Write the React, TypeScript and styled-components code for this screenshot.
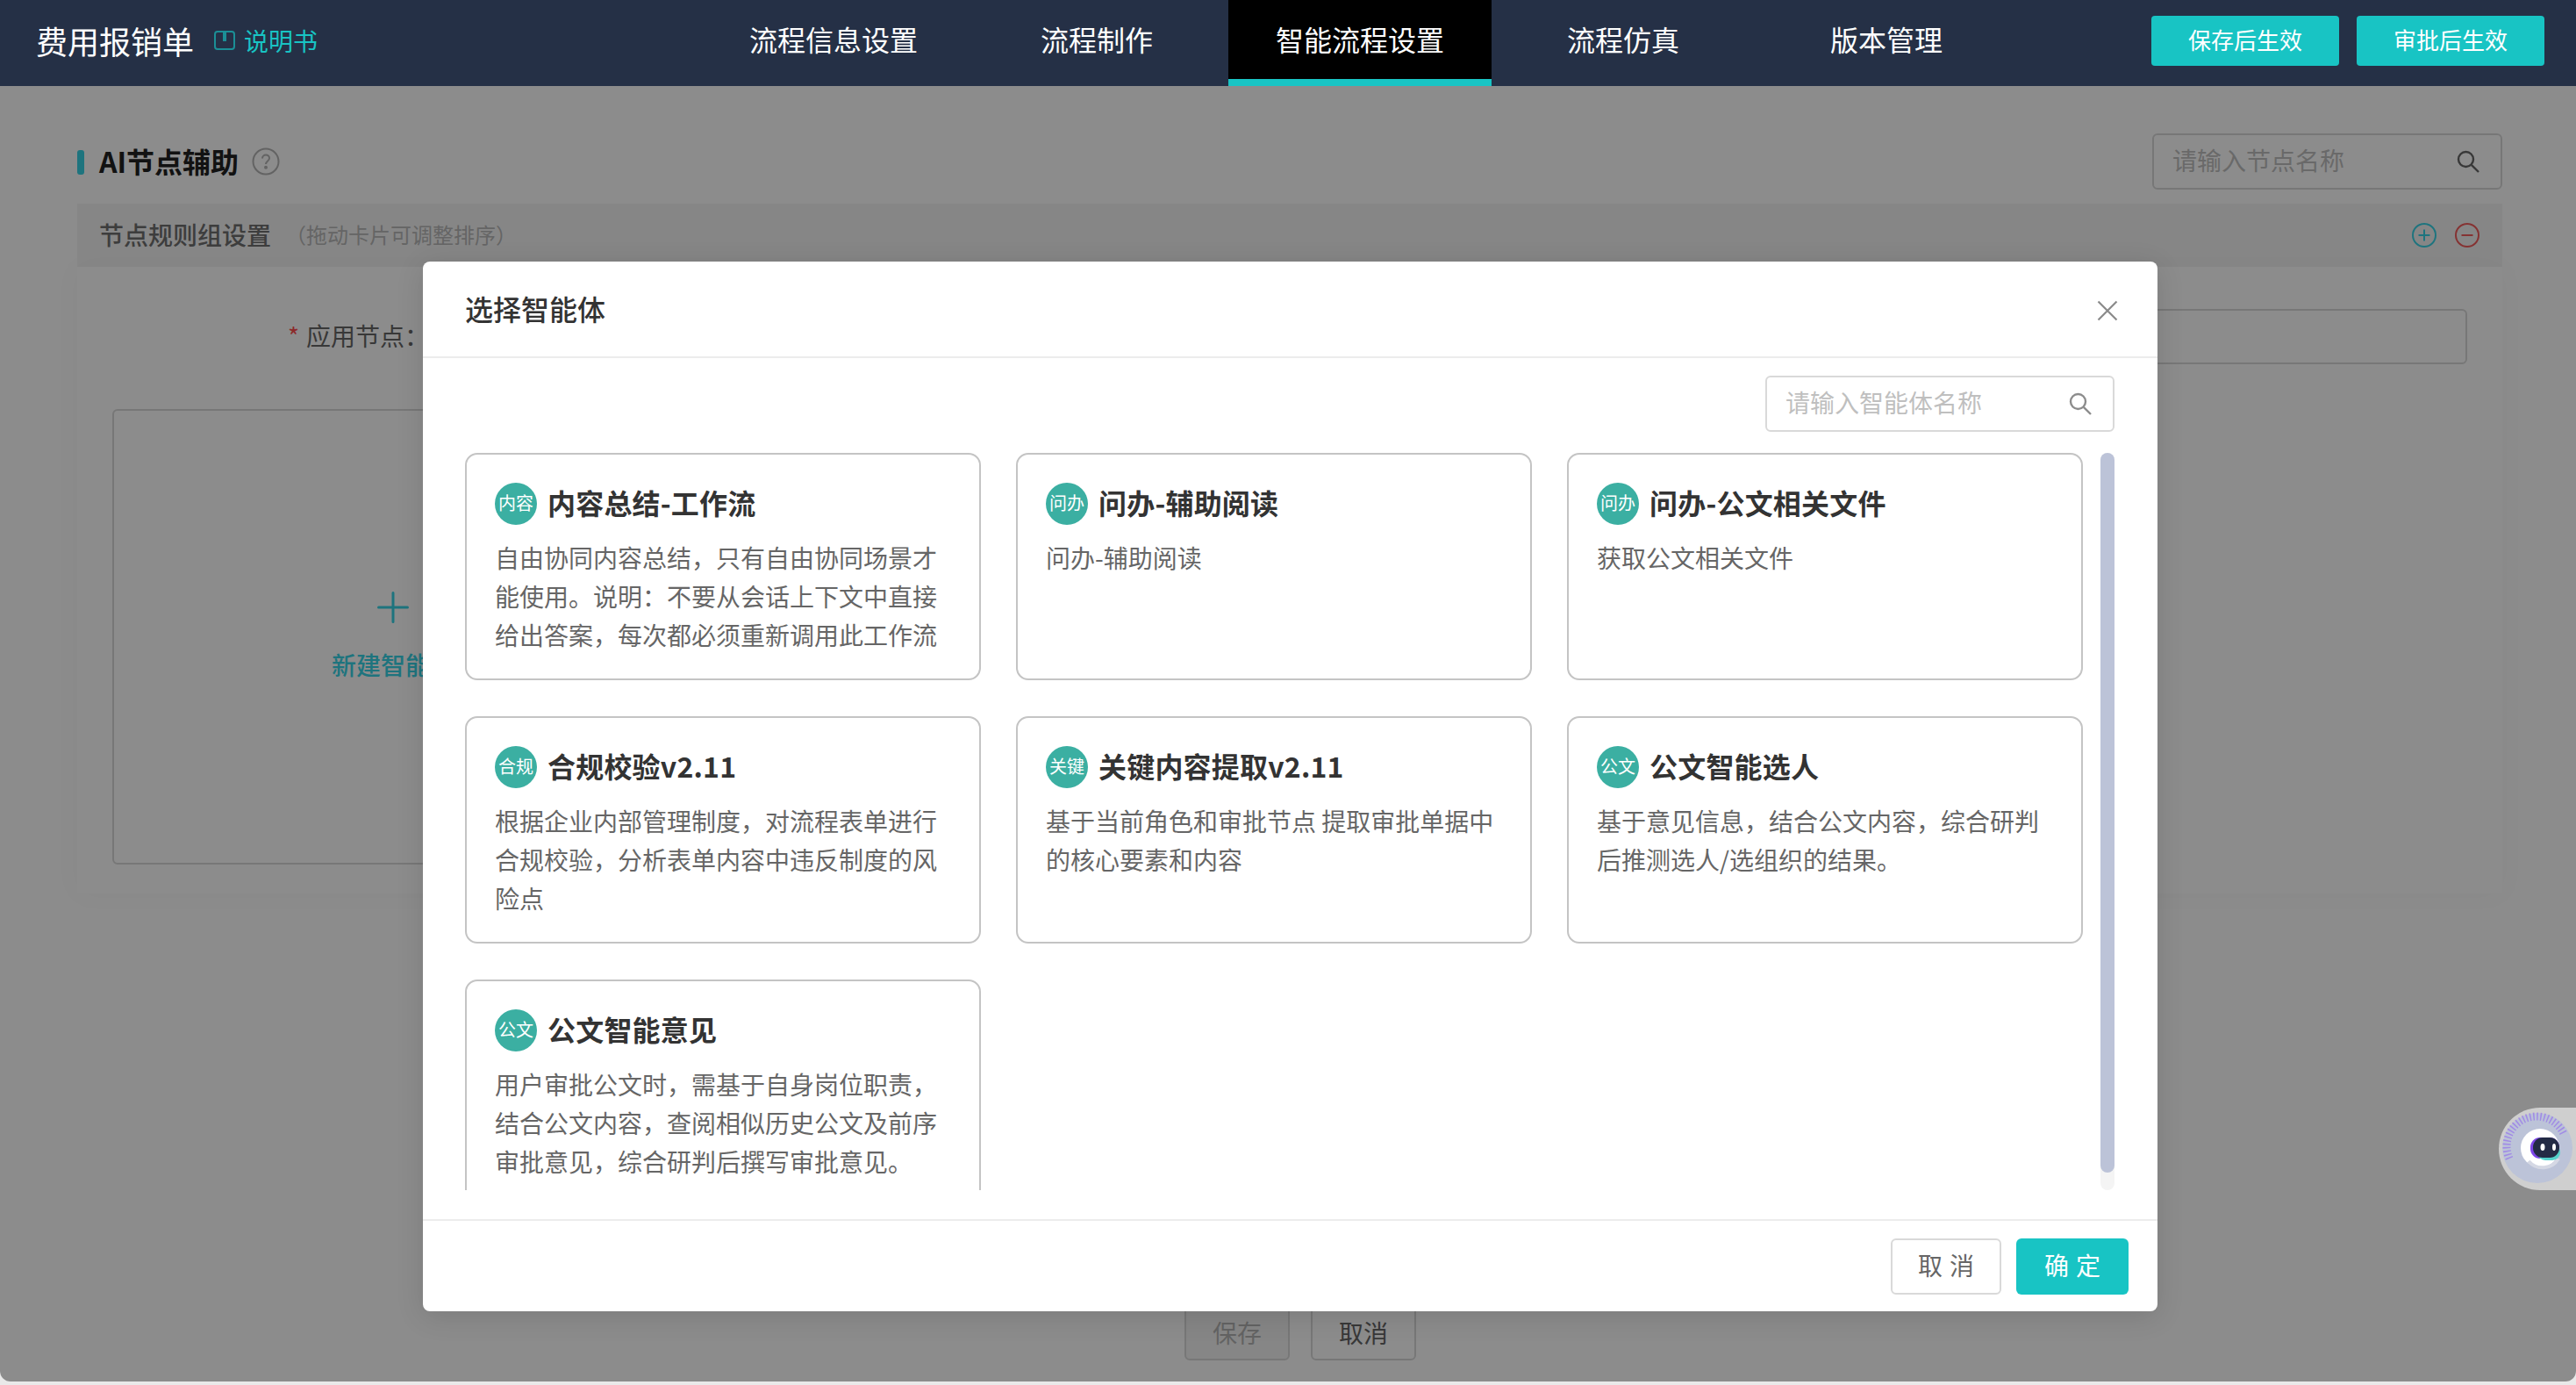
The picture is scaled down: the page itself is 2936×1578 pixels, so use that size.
import React from 'react';
import styled, {createGlobalStyle} from 'styled-components';

const GlobalStyle = createGlobalStyle`
  html, body {
    margin: 0;
    padding: 0;
    background: #e9e9e9;
  }

  * {
    box-sizing: border-box;
  }

  body {
    font-family: "Noto Sans CJK SC", "Noto Sans", sans-serif;
    color: #333;
  }
`;

const TEAL = '#18c4c4';
const DIM_TEAL = '#38d4e6';

const Page = styled.div`
  position: relative;
  width: 2936px;
  height: 1574px;
  overflow: hidden;
  background: #fff;
  border-radius: 0 0 12px 12px;
`;

const Header = styled.header`
  display: flex;
  height: 98px;
  background: #253046;
  color: #fff;
`;

const Brand = styled.div`
  display: flex;
  align-items: center;
  width: 800px;
  height: 92px;
  padding-left: 41px;
`;

const BrandTitle = styled.span`
  font-size: 36px;
  line-height: 50px;
`;

const ManualLink = styled.span`
  display: flex;
  align-items: center;
  gap: 9px;
  margin-left: 22px;
  font-size: 28px;
  line-height: 40px;
  color: ${TEAL};
`;

const Nav = styled.nav`
  display: flex;
  gap: 32px;
`;

const Tab = styled.div<{$active?: boolean; $offset?: number}>`
  height: 98px;
  margin-left: ${p => p.$offset || 0}px;
  padding: 0 54px;
  font-size: 32px;
  line-height: 88px;
  background: ${p => (p.$active ? '#000' : 'transparent')};
  border-bottom: 8px solid ${p => (p.$active ? TEAL : 'transparent')};
`;

const HeaderActions = styled.div`
  display: flex;
  gap: 20px;
  margin-left: auto;
  padding: 18px 36px 0 0;
`;

const PublishButton = styled.div`
  width: 214px;
  height: 57px;
  font-size: 26px;
  line-height: 54px;
  text-align: center;
  background: ${TEAL};
  border-radius: 4px;
`;

const Content = styled.main`
  padding: 54px 84px 0 88px;
`;

const SectionHead = styled.div`
  display: flex;
  align-items: center;
  height: 64px;
  margin-bottom: 16px;
`;

const SectionBar = styled.span`
  width: 8px;
  height: 28px;
  margin-top: 1px;
  border-radius: 3px;
  background: ${DIM_TEAL};
`;

const SectionTitle = styled.h2`
  margin: -2px 15px 0 17px;
  font-size: 32px;
  font-weight: 700;
  line-height: 44px;
  color: #222;
`;

const SearchBox = styled.div<{$width: number}>`
  display: flex;
  align-items: center;
  justify-content: space-between;
  width: ${p => p.$width}px;
  height: 64px;
  padding: 0 24px 0 21px;
  font-size: 28px;
  color: #bfbfbf;
  background: #fff;
  border: 2px solid #d9d9d9;
  border-radius: 6px;
`;

const Placeholder = styled.span`
  margin-top: -4px;
`;

const PushRight = styled.div`
  margin-left: auto;
`;

const GroupHeader = styled.div`
  display: flex;
  align-items: center;
  height: 72px;
  padding: 0 26px 0 25px;
  background: #f5f5f5;
`;

const GroupTitle = styled.span`
  margin-top: -3px;
  font-size: 28px;
  font-weight: 500;
  line-height: 40px;
  color: #707070;
`;

const GroupHint = styled.span`
  margin: -3px 0 0 16px;
  font-size: 24px;
  line-height: 40px;
  color: #b8b8b8;
`;

const GroupActions = styled.div`
  display: flex;
  gap: 21px;
  margin-left: auto;
`;

const GroupPanel = styled.section`
  height: 714px;
  padding: 48px 40px 0;
  background: #fff;
  box-shadow: 0 0 30px rgba(0, 0, 0, 0.03);
`;

const FieldRow = styled.div`
  display: flex;
  align-items: center;
`;

const FieldLabel = styled.label`
  width: 369px;
  margin-top: -3px;
  padding-right: 8px;
  font-size: 28px;
  line-height: 60px;
  text-align: right;
  color: #666;
`;

const RequiredMark = styled.span`
  margin-right: 8px;
  color: #ff4d4f;
`;

const FieldInput = styled.div`
  flex: 1;
  height: 63px;
  background: #fff;
  border: 2px solid #d9d9d9;
  border-radius: 6px;
`;

const AgentSlot = styled.div`
  display: flex;
  flex-direction: column;
  align-items: center;
  width: 640px;
  height: 519px;
  margin-top: 51px;
  padding-top: 206px;
  border: 2px solid #d9d9d9;
  border-radius: 6px;
`;

const AgentSlotLabel = styled.span`
  margin-top: 27px;
  font-size: 28px;
  font-weight: 500;
  line-height: 40px;
  color: ${DIM_TEAL};
`;

const PageFooter = styled.div`
  display: flex;
  justify-content: center;
  gap: 24px;
  margin-top: 468px;
  padding-left: 24px;
`;

const PageButton = styled.div<{$disabled?: boolean}>`
  width: 120px;
  height: 64px;
  font-size: 28px;
  line-height: 60px;
  text-align: center;
  color: ${p => (p.$disabled ? '#b5b5b5' : '#666')};
  background: ${p => (p.$disabled ? '#f5f5f5' : '#fff')};
  border: 2px solid #d9d9d9;
  border-radius: 6px;
`;

const Mask = styled.div`
  position: absolute;
  inset: 98px 0 0;
  background: rgba(0, 0, 0, 0.45);
`;

const Modal = styled.div`
  position: absolute;
  top: 298px;
  left: 482px;
  display: flex;
  flex-direction: column;
  width: 1977px;
  height: 1196px;
  background: #fff;
  border-radius: 8px;
  box-shadow: 0 6px 32px rgba(0, 0, 0, 0.12);
`;

const ModalHeader = styled.div`
  display: flex;
  align-items: center;
  justify-content: space-between;
  height: 110px;
  padding: 0 45px 0 48px;
  border-bottom: 2px solid #ececec;
`;

const ModalTitle = styled.h3`
  margin: -3px 0 0;
  font-size: 32px;
  font-weight: 500;
  line-height: 44px;
  color: #333;
`;

const CloseButton = styled.span`
  display: flex;
  margin-top: 3px;
`;

const ModalBody = styled.div`
  display: flex;
  flex-direction: column;
  flex: 1;
  min-height: 0;
  padding: 20px 49px 33px 48px;
`;

const ModalSearchRow = styled.div`
  display: flex;
  justify-content: flex-end;
  margin-bottom: 24px;
`;

const ListArea = styled.div`
  display: flex;
  flex: 1;
  gap: 20px;
  min-height: 0;
`;

const CardViewport = styled.div`
  width: 1844px;
  overflow: hidden;
`;

const CardGrid = styled.div`
  display: grid;
  grid-template-columns: repeat(3, 588px);
  grid-auto-rows: 259px;
  column-gap: 40px;
  row-gap: 41px;
`;

const AgentCard = styled.article`
  padding: 32px 30px 0 32px;
  background: #fff;
  border: 2px solid #c4c4c4;
  border-radius: 14px;
`;

const CardHead = styled.div`
  display: flex;
  align-items: center;
  gap: 12px;
  height: 48px;
`;

const CardBadge = styled.span`
  flex: none;
  width: 48px;
  height: 48px;
  font-size: 20px;
  line-height: 46px;
  text-align: center;
  color: #fff;
  background: #3bafa2;
  border-radius: 50%;
`;

const CardTitle = styled.h4`
  margin: -5px 0 0;
  font-size: 32px;
  font-weight: 700;
  line-height: 44px;
  letter-spacing: 0.2px;
  color: #333;
`;

const CardDesc = styled.p`
  margin: 15px 0 0;
  font-size: 28px;
  line-height: 44px;
  color: #666;
`;

const ScrollTrack = styled.div`
  width: 16px;
  height: 100%;
  padding-bottom: 20px;
  background: #f4f4f4;
  border-radius: 8px;
`;

const ScrollThumb = styled.div`
  height: 100%;
  background: #bcc3d8;
  border-radius: 8px;
`;

const ModalFooter = styled.div`
  display: flex;
  justify-content: flex-end;
  gap: 17px;
  height: 105px;
  padding: 20px 33px 0 0;
  border-top: 2px solid #ececec;
`;

const ModalButton = styled.div<{$primary?: boolean}>`
  width: ${p => (p.$primary ? 128 : 126)}px;
  height: 64px;
  font-size: 28px;
  line-height: ${p => (p.$primary ? 61 : 57)}px;
  letter-spacing: 8px;
  text-indent: 8px;
  text-align: center;
  color: ${p => (p.$primary ? '#fff' : '#666')};
  background: ${p => (p.$primary ? TEAL : '#fff')};
  border: ${p => (p.$primary ? 'none' : '2px solid #d9d9d9')};
  border-radius: 6px;
`;

const AssistantTab = styled.div`
  position: absolute;
  top: 1262px;
  right: 0;
  width: 88px;
  height: 94px;
  background: #cfcfcf;
  border-radius: 47px 0 0 47px;
`;

const agents = [
  {badge: '内容', title: '内容总结-工作流', desc: '自由协同内容总结，只有自由协同场景才能使用。说明：不要从会话上下文中直接给出答案，每次都必须重新调用此工作流'},
  {badge: '问办', title: '问办-辅助阅读', desc: '问办-辅助阅读'},
  {badge: '问办', title: '问办-公文相关文件', desc: '获取公文相关文件'},
  {badge: '合规', title: '合规校验v2.11', desc: '根据企业内部管理制度，对流程表单进行合规校验，分析表单内容中违反制度的风险点'},
  {badge: '关键', title: '关键内容提取v2.11', desc: '基于当前角色和审批节点 提取审批单据中的核心要素和内容'},
  {badge: '公文', title: '公文智能选人', desc: '基于意见信息，结合公文内容，综合研判后推测选人/选组织的结果。'},
  {badge: '公文', title: '公文智能意见', desc: '用户审批公文时，需基于自身岗位职责，结合公文内容，查阅相似历史公文及前序审批意见，综合研判后撰写审批意见。'},
];

const SearchIcon: React.FC<{color: string}> = ({color}) => (
  <svg width="26" height="26" viewBox="0 0 26 26" fill="none" stroke={color} strokeWidth="2.4">
    <circle cx="10.5" cy="10.5" r="8.5"/>
    <path d="M16.8 16.8 25 25"/>
  </svg>
);

const BookIcon = () => (
  <svg width="26" height="26" viewBox="0 0 26 26" fill="none" stroke="#1b8f96" strokeWidth="2">
    <rect x="2" y="3" width="22" height="20" rx="3"/>
    <path d="M13 3v11" strokeWidth="4"/>
  </svg>
);

const HelpIcon = () => (
  <svg width="32" height="32" viewBox="0 0 32 32" fill="none" stroke="#b4b4b4" strokeWidth="2">
    <circle cx="16" cy="16" r="14.5"/>
    <path d="M12 12.5c0-2.400 1.800-4 4-4s4 1.600 4 3.800c0 3.200-4 3.200-4 6.700"/>
    <circle cx="16" cy="22.800" r="1" fill="#b4b4b4"/>
  </svg>
);

const RoundAction: React.FC<{color: string; plus?: boolean}> = ({color, plus}) => (
  <svg width="28" height="28" viewBox="0 0 28 28" fill="none" stroke={color} strokeWidth="2">
    <circle cx="14" cy="14" r="13"/>
    <path d="M7.5 14h13"/>
    {plus && <path d="M14 7.500v13"/>}
  </svg>
);

const PlusIcon = () => (
  <svg width="36" height="36" viewBox="0 0 36 36" fill="none" stroke={DIM_TEAL} strokeWidth="3" strokeLinecap="round">
    <path d="M1.500 18h33M18 1.500v33"/>
  </svg>
);

const CloseIcon = () => (
  <svg width="24" height="24" viewBox="0 0 24 24" fill="none" stroke="#8a8a8a" strokeWidth="2.2">
    <path d="M1.500 1.500 22.500 22.500M22.500 1.500 1.500 22.500"/>
  </svg>
);

const RobotIcon = () => (
  <svg width="88" height="94" viewBox="0 0 88 94">
    <circle cx="44" cy="46" r="40" fill="#bcc3d8"/>
    <path d="M12 58A34 34 0 0 1 74 30" fill="none" stroke="#8a5cf0" strokeWidth="9" strokeDasharray="1.500 2.500" opacity="0.55"/>
    <circle cx="47" cy="46" r="22" fill="#fff"/>
    <path d="M68 58a21 21 0 0 1-34 3" fill="none" stroke="#d5d8e4" strokeWidth="4"/>
    <rect x="36" y="34" width="33" height="24" rx="11" fill="#7d46e8"/>
    <rect x="44" y="42" width="26" height="18" rx="9" fill="#54d2cc"/>
    <rect x="39" y="34" width="30" height="23" rx="11" fill="#232b45"/>
    <ellipse cx="50" cy="45" rx="2.500" ry="4" fill="#fff"/>
    <ellipse cx="63" cy="45" rx="2" ry="4" fill="#fff"/>
  </svg>
);

const App: React.FC = () => {
  return (
    <Page>
      <GlobalStyle/>
      <Header>
        <Brand>
          <BrandTitle>费用报销单</BrandTitle>
          <ManualLink>
            <BookIcon/>
            说明书
          </ManualLink>
        </Brand>
        <Nav>
          <Tab>流程信息设置</Tab>
          <Tab>流程制作</Tab>
          <Tab $active>智能流程设置</Tab>
          <Tab>流程仿真</Tab>
          <Tab $offset={32}>版本管理</Tab>
        </Nav>
        <HeaderActions>
          <PublishButton>保存后生效</PublishButton>
          <PublishButton>审批后生效</PublishButton>
        </HeaderActions>
      </Header>

      <Content>
        <SectionHead>
          <SectionBar/>
          <SectionTitle>AI节点辅助</SectionTitle>
          <HelpIcon/>
          <PushRight>
            <SearchBox $width={399}>
              <Placeholder>请输入节点名称</Placeholder>
              <SearchIcon color="#666"/>
            </SearchBox>
          </PushRight>
        </SectionHead>
        <GroupHeader>
          <GroupTitle>节点规则组设置</GroupTitle>
          <GroupHint>（拖动卡片可调整排序）</GroupHint>
          <GroupActions>
            <RoundAction color={DIM_TEAL} plus/>
            <RoundAction color="#f25c5c"/>
          </GroupActions>
        </GroupHeader>
        <GroupPanel>
          <FieldRow>
            <FieldLabel>
              <RequiredMark>*</RequiredMark>
              应用节点：
            </FieldLabel>
            <FieldInput/>
          </FieldRow>
          <AgentSlot>
            <PlusIcon/>
            <AgentSlotLabel>新建智能体</AgentSlotLabel>
          </AgentSlot>
        </GroupPanel>
        <PageFooter>
          <PageButton $disabled>保存</PageButton>
          <PageButton>取消</PageButton>
        </PageFooter>
      </Content>

      <Mask/>

      <Modal>
        <ModalHeader>
          <ModalTitle>选择智能体</ModalTitle>
          <CloseButton>
            <CloseIcon/>
          </CloseButton>
        </ModalHeader>
        <ModalBody>
          <ModalSearchRow>
            <SearchBox $width={398}>
              <Placeholder>请输入智能体名称</Placeholder>
              <SearchIcon color="#8c8c8c"/>
            </SearchBox>
          </ModalSearchRow>
          <ListArea>
            <CardViewport>
              <CardGrid>
                {agents.map(agent => (
                  <AgentCard key={agent.title}>
                    <CardHead>
                      <CardBadge>{agent.badge}</CardBadge>
                      <CardTitle>{agent.title}</CardTitle>
                    </CardHead>
                    <CardDesc>{agent.desc}</CardDesc>
                  </AgentCard>
                ))}
              </CardGrid>
            </CardViewport>
            <ScrollTrack>
              <ScrollThumb/>
            </ScrollTrack>
          </ListArea>
        </ModalBody>
        <ModalFooter>
          <ModalButton>取消</ModalButton>
          <ModalButton $primary>确定</ModalButton>
        </ModalFooter>
      </Modal>

      <AssistantTab>
        <RobotIcon/>
      </AssistantTab>
    </Page>
  );
};

export default App;
